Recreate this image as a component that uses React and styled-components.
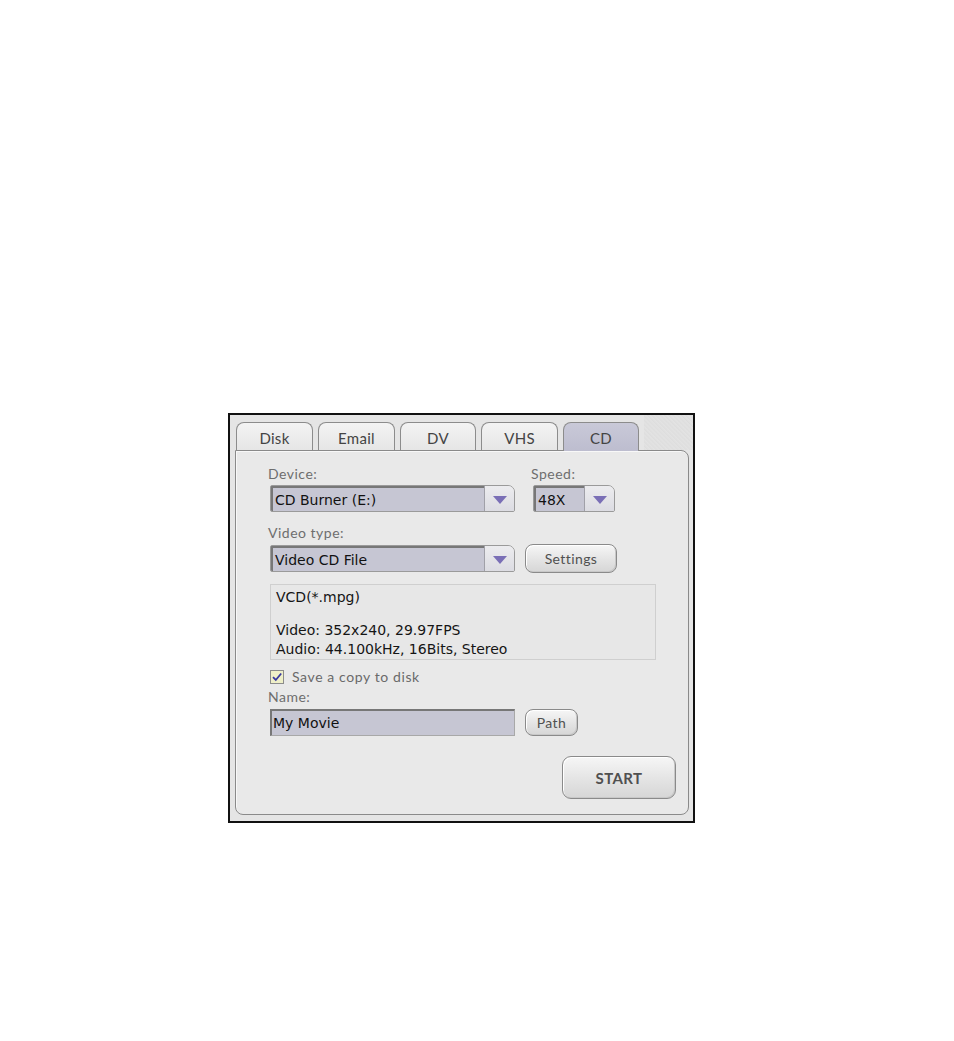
import React, { useState } from "react";
import styled, { createGlobalStyle } from "styled-components";

const GlobalStyle = createGlobalStyle`
  body {
    margin: 0;
    background: #ffffff;
  }
`;

const label = `"Lato", "Noto Sans", sans-serif`;
const field = `"DejaVu Sans", "Liberation Sans", sans-serif`;

const Frame = styled.div`
  margin: 413px 0 0 228px;
  width: 467px;
  height: 410px;
  box-sizing: border-box;
  border: 2px solid #111;
  background: #e5e5e5;
  padding: 0 4px 6px 5px;
  display: flex;
  flex-direction: column;
`;

const TabStrip = styled.div`
  display: flex;
  gap: 5px;
  padding: 7px 0 0 1px;
  height: 35px;
  box-sizing: border-box;
  position: relative;
  z-index: 1;
`;

const Tab = styled.div`
  width: ${(p) => p.w}px;
  box-sizing: border-box;
  border: 1px solid #8c8c8c;
  border-bottom: none;
  border-radius: 8px 8px 0 0;
  background: ${(p) =>
    p.active
      ? "linear-gradient(#c9c9d8, #bdbdcf)"
      : "linear-gradient(#f3f3f3, #e6e6e6)"};
  color: #444;
  font-family: ${label};
  font-size: 15px;
  letter-spacing: 0.3px;
  display: flex;
  align-items: center;
  justify-content: center;
  padding-top: 2px;
  height: ${(p) => (p.active ? "29px" : "28px")};
`;

const Filler = styled.div`
  flex: 1;
  margin: -7px -4px 0 0;
  background: repeating-linear-gradient(
    45deg,
    #dedede 0px,
    #e3e3e3 2px,
    #dcdcdc 3px
  );
`;

const Panel = styled.div`
  flex: 1;
  box-sizing: border-box;
  border: 1px solid #8a8a8a;
  border-radius: 0 8px 8px 8px;
  background: #e9e9e9;
  padding: 14px 0 0 34px;
  display: flex;
  flex-direction: column;
  box-shadow: inset 1px 1px 0 #f8f8f8;
`;

const Row = styled.div`
  display: flex;
  align-items: ${(p) => p.align || "flex-start"};
  gap: ${(p) => p.gap || "0px"};
  margin-top: ${(p) => p.top || "0px"};
`;

const Col = styled.div`
  display: flex;
  flex-direction: column;
`;

const Label = styled.div`
  font-family: ${label};
  font-size: 14px;
  letter-spacing: 0.5px;
  color: #6e6e6e;
  height: 17px;
  line-height: 17px;
  margin-left: -2px;
  margin-top: ${(p) => p.top || 0}px;
  margin-bottom: ${(p) => (p.bottom === undefined ? 3 : p.bottom)}px;
`;

const Combo = styled.div`
  width: ${(p) => p.w}px;
  height: 27px;
  box-sizing: border-box;
  display: flex;
  border-radius: 2px 7px 2px 2px;
  overflow: hidden;
  border: 1px solid #9a9a9a;
`;

const ComboValue = styled.div`
  flex: 1;
  background: #c6c6d3;
  border-top: 2px solid #777;
  border-left: 2px solid #777;
  font-family: ${field};
  font-size: 14px;
  color: #111;
  display: flex;
  align-items: center;
  padding-left: 2px;
`;

const ComboButton = styled.div`
  width: 29px;
  background: linear-gradient(#ececef, #dcdce2);
  border-left: 1px solid #a0a0a8;
  display: flex;
  align-items: center;
  justify-content: center;
`;

const Arrow = styled.div`
  width: 0;
  height: 0;
  border-left: 7px solid transparent;
  border-right: 7px solid transparent;
  border-top: 8px solid #7a6fb6;
  margin-top: 2px;
`;

const Button = styled.div`
  width: ${(p) => p.w}px;
  height: ${(p) => p.h}px;
  box-sizing: border-box;
  border: 1px solid #8a8a8a;
  border-radius: ${(p) => p.r || 8}px;
  background: linear-gradient(#f6f6f6, #e2e2e2 60%, #d6d6d6);
  box-shadow: inset 1px 1px 0 #ffffff, inset -1px -1px 0 #c8c8c8;
  font-family: ${label};
  font-size: ${(p) => p.fs || 14}px;
  font-weight: ${(p) => p.fw || 400};
  letter-spacing: 0.4px;
  color: #505050;
  display: flex;
  align-items: center;
  justify-content: center;
`;

const InfoBox = styled.div`
  width: 386px;
  height: 76px;
  box-sizing: border-box;
  border: 1px solid #cfcfcf;
  background: #e7e7e7;
  padding: 3px 0 0 5px;
  margin-top: 11px;
  font-family: ${field};
  font-size: 14px;
  line-height: 19px;
  color: #151515;
`;

const InfoLine = styled.div`
  margin-top: ${(p) => p.top || 0}px;
`;

const Check = styled.div`
  width: 14px;
  height: 14px;
  box-sizing: border-box;
  border: 1px solid #8c8c8c;
  background: #efefc8;
  display: flex;
  align-items: center;
  justify-content: center;
`;

const CheckText = styled.div`
  font-family: ${label};
  font-size: 14px;
  letter-spacing: 0.6px;
  color: #6a6a6a;
`;

const TextInput = styled.div`
  width: 245px;
  height: 27px;
  box-sizing: border-box;
  background: #c6c6d3;
  border-top: 2px solid #777;
  border-left: 2px solid #777;
  border-right: 1px solid #a8a8a8;
  border-bottom: 1px solid #a8a8a8;
  font-family: ${field};
  font-size: 14px;
  color: #111;
  display: flex;
  align-items: center;
  padding-left: 1px;
`;

const Footer = styled.div`
  display: flex;
  justify-content: flex-end;
  padding-right: 12px;
  margin-top: 20px;
`;

const tabs = [
  { name: "Disk", w: 77 },
  { name: "Email", w: 77 },
  { name: "DV", w: 76 },
  { name: "VHS", w: 77 },
  { name: "CD", w: 76 },
];

export default function App() {
  const [active] = useState("CD");
  return (
    <>
      <GlobalStyle />
      <Frame>
        <TabStrip>
          {tabs.map((t) => (
            <Tab key={t.name} w={t.w} active={t.name === active}>
              {t.name}
            </Tab>
          ))}
          <Filler />
        </TabStrip>
        <Panel>
          <Row gap="18px">
            <Col>
              <Label>Device:</Label>
              <Combo w={245}>
                <ComboValue>CD Burner (E:)</ComboValue>
                <ComboButton>
                  <Arrow />
                </ComboButton>
              </Combo>
            </Col>
            <Col>
              <Label>Speed:</Label>
              <Combo w={82}>
                <ComboValue>48X</ComboValue>
                <ComboButton>
                  <Arrow />
                </ComboButton>
              </Combo>
            </Col>
          </Row>
          <Label top={12}>Video type:</Label>
          <Row gap="10px" align="center">
            <Combo w={245}>
              <ComboValue>Video CD File</ComboValue>
              <ComboButton>
                <Arrow />
              </ComboButton>
            </Combo>
            <Button w={92} h={29}>
              Settings
            </Button>
          </Row>
          <InfoBox>
            <InfoLine>VCD(*.mpg)</InfoLine>
            <InfoLine top={14}>Video: 352x240, 29.97FPS</InfoLine>
            <InfoLine>Audio: 44.100kHz, 16Bits, Stereo</InfoLine>
          </InfoBox>
          <Row gap="8px" align="center" top="8px">
            <Check>
              <svg width="12" height="12" viewBox="0 0 12 12">
                <path
                  d="M2 6.2 L4.8 9 L10.2 2.5"
                  fill="none"
                  stroke="#3a3aa0"
                  strokeWidth="1.8"
                />
              </svg>
            </Check>
            <CheckText>Save a copy to disk</CheckText>
          </Row>
          <Label top={3} bottom={4}>
            Name:
          </Label>
          <Row gap="10px" align="center">
            <TextInput>My Movie</TextInput>
            <Button w={53} h={27}>
              Path
            </Button>
          </Row>
          <Footer>
            <Button w={114} h={43} r={9} fs={15} fw={700}>
              START
            </Button>
          </Footer>
        </Panel>
      </Frame>
    </>
  );
}
